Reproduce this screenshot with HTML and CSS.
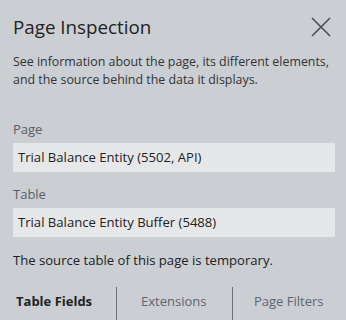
FILE: index.html
```html
<!DOCTYPE html>
<html>
<head>
<meta charset="utf-8">
<link rel="stylesheet" href="styles.css">
</head>
<body>
<div class="panel">
  <div class="header">
    <h1 class="title">Page Inspection</h1>
    <button class="close" aria-label="Close">
      <svg width="20" height="20" viewBox="0 0 20 20"><path d="M1 1 L19 19 M19 1 L1 19" stroke="#474a4f" stroke-width="1.5" fill="none"/></svg>
    </button>
  </div>
  <p class="desc">See information about the page, its different elements, and the source behind the data it displays.</p>
  <div class="field">
    <div class="label">Page</div>
    <div class="box">Trial Balance Entity (5502, API)</div>
  </div>
  <div class="field">
    <div class="label">Table</div>
    <div class="box">Trial Balance Entity Buffer (5488)</div>
  </div>
  <p class="note">The source table of this page is temporary.</p>
  <div class="tabs">
    <div class="tab tab-first active">Table Fields</div>
    <div class="tab tab-mid">Extensions</div>
    <div class="tab tab-last">Page Filters</div>
  </div>
</div>
</body>
</html>
```
FILE: styles.css
```css
* { box-sizing: border-box; }
html, body { margin: 0; padding: 0; }
body {
  background: #cbced3;
  font-family: "Open Sans", "Noto Sans", sans-serif;
  color: #222;
  width: 346px;
  height: 320px;
  overflow: hidden;
}
.panel {
  padding: 11px 11px 0 13px;
}
.header {
  display: flex;
  justify-content: space-between;
  align-items: center;
  height: 32px;
}
.title {
  margin: 0;
  font-size: 18.8px;
  font-weight: 400;
  line-height: 32px;
  color: #222;
}
.close {
  background: none;
  border: 0;
  padding: 0;
  margin-right: 4px;
  width: 20px;
  height: 20px;
  display: flex;
}
.desc {
  margin: 10px 0 0 0;
  font-size: 12.4px;
  line-height: 17.5px;
  color: #333;
}
.field { margin-top: 32px; }
.field + .field { margin-top: 13px; }
.label {
  font-size: 13px;
  line-height: 18px;
  color: #5b6067;
  margin-bottom: 5px;
}
.box {
  background: #e6e7e9;
  height: 29px;
  line-height: 29px;
  padding-left: 5px;
  font-size: 13.1px;
  color: #222;
}
.note {
  margin: 13px 0 0 0;
  font-size: 13.1px;
  line-height: 20px;
  color: #222;
}
.tabs {
  display: flex;
  margin-top: 17px;
  margin-left: -13px;
  height: 40px;
}
.tab {
  font-size: 13px;
  line-height: 28px;
  color: #5e6570;
  border-right: 1px solid #6d7177;
  height: 40px;
}
.tab-first { width: 117px; padding-left: 16px; }
.tab-mid { width: 116px; padding-left: 24px; }
.tab-last { border-right: 0; padding-left: 21px; }
.active { font-weight: 700; color: #222; }
```
